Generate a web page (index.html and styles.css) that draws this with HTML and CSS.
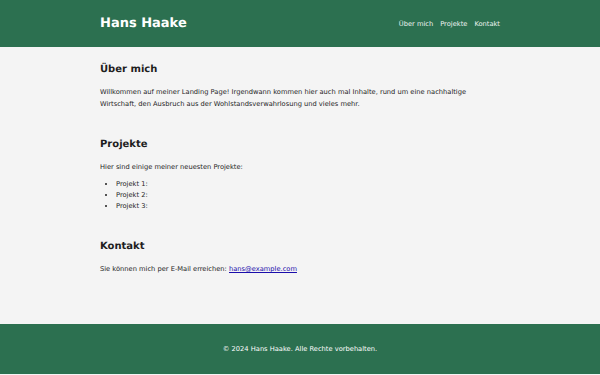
FILE: index.html
```html
<!DOCTYPE html>
<html lang="de">
<head>
  <meta charset="UTF-8">
  <meta name="viewport" content="width=device-width, initial-scale=1.0">
  <title>Hans Haake</title>
  <link rel="stylesheet" href="styles.css">
</head>
<body>

  <header class="site-header">
    <div class="container header-inner">
      <h1 class="logo">Hans Haake</h1>
      <nav class="nav">
        <a href="#about">Über mich</a>
        <a href="#projects">Projekte</a>
        <a href="#contact">Kontakt</a>
      </nav>
    </div>
  </header>

  <main class="container main">
    <section id="about" class="section">
      <h2>Über mich</h2>
      <p>Willkommen auf meiner Landing Page! Irgendwann kommen hier auch mal Inhalte, rund um eine nachhaltige Wirtschaft, den Ausbruch aus der Wohlstandsverwahrlosung und vieles mehr.</p>
    </section>

    <section id="projects" class="section">
      <h2>Projekte</h2>
      <p>Hier sind einige meiner neuesten Projekte:</p>
      <ul class="projects">
        <li>Projekt 1: </li>
        <li>Projekt 2: </li>
        <li>Projekt 3: </li>
      </ul>
    </section>

    <section id="contact" class="section">
      <h2>Kontakt</h2>
      <p>Sie können mich per E-Mail erreichen: <a href="mailto:hans@example.com">hans@example.com</a></p>
    </section>
  </main>

  <footer class="site-footer">
    <p>&copy; 2024 Hans Haake. Alle Rechte vorbehalten.</p>
  </footer>

</body>
</html>
```

FILE: styles.css
```css
body {
  font-family: "DejaVu Sans", sans-serif;
  font-size: 6.7px;
  line-height: 12px;
  margin: 0;
  background-color: #f4f4f4;
  color: #1e1e1e;
  text-rendering: geometricPrecision;
}
.container {
  max-width: 400px;
  margin: 0 auto;
}
.site-header {
  background-color: #2c7050;
  color: #fff;
}
.header-inner {
  display: flex;
  justify-content: space-between;
  align-items: center;
  height: 47px;
}
.logo {
  margin: 0;
  font-size: 13px;
}
.nav {
  display: flex;
  gap: 7px;
  font-size: 6.7px;
}
.nav a {
  color: #eef4f0;
  text-decoration: none;
}
.main {
  padding: 16px 0 49px;
}
.section + .section {
  margin-top: 28px;
}
h2 {
  font-size: 10px;
  line-height: 14px;
  margin: 0 0 9px;
}
p {
  margin: 0;
}
.projects {
  margin: 6px 0 1px;
  padding-left: 16px;
  line-height: 11px;
}
a {
  color: #1a0dab;
}
.site-footer {
  background-color: #2c7050;
  color: #fff;
  text-align: center;
  padding: 19px 0;
}
```
